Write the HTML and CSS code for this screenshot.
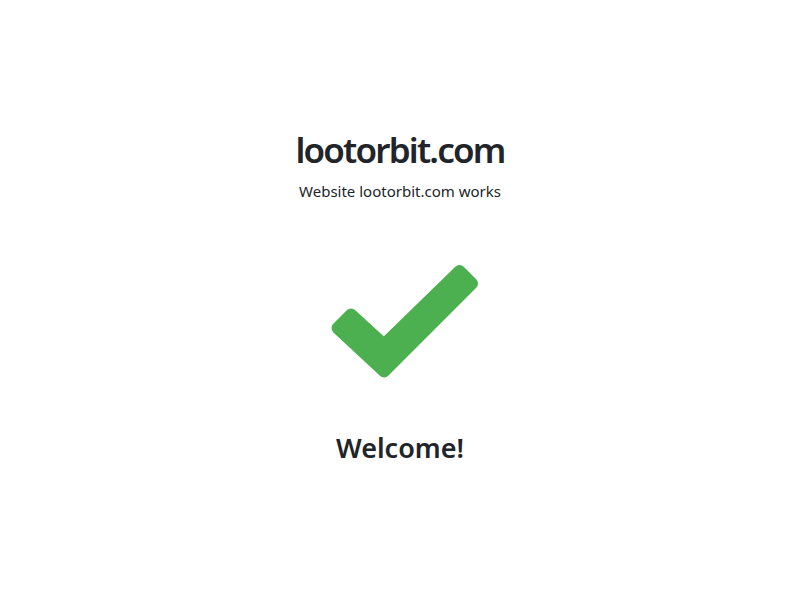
FILE: index.html
```html
<!DOCTYPE html>
<html lang="en">
<head>
<meta charset="utf-8">
<title>lootorbit.com</title>
<link rel="stylesheet" href="styles.css">
</head>
<body>
<main class="page">
  <h1 class="title">lootorbit.com</h1>
  <p class="subtitle">Website lootorbit.com works</p>
  <svg class="check" viewBox="320 259 160 125" width="160" height="125" aria-hidden="true">
    <polygon points="337.5,327 384,370.4 472,282.5 459.5,270 384,343.6 351,313.5" fill="#4caf50" stroke="#4caf50" stroke-width="12" stroke-linejoin="round"/>
  </svg>
  <h2 class="welcome">Welcome!</h2>
</main>
</body>
</html>
```

FILE: styles.css
```css
html, body {
  margin: 0;
  padding: 0;
  background: #ffffff;
}

body {
  font-family: "Noto Sans", "Open Sans", "DejaVu Sans", sans-serif;
  color: #212529;
}

.page {
  display: flex;
  flex-direction: column;
  align-items: center;
  padding-top: 126px;
}

.title {
  margin: 0;
  font-size: 35px;
  font-weight: 600;
  letter-spacing: -1.8px;
  line-height: 48px;
}

.subtitle {
  margin: 6px 0 0;
  font-size: 15px;
  line-height: 22px;
}

.check {
  display: block;
  margin-top: 58px;
}

.welcome {
  margin: 46px 0 0;
  font-size: 27px;
  font-weight: 600;
  line-height: 34px;
}
```
